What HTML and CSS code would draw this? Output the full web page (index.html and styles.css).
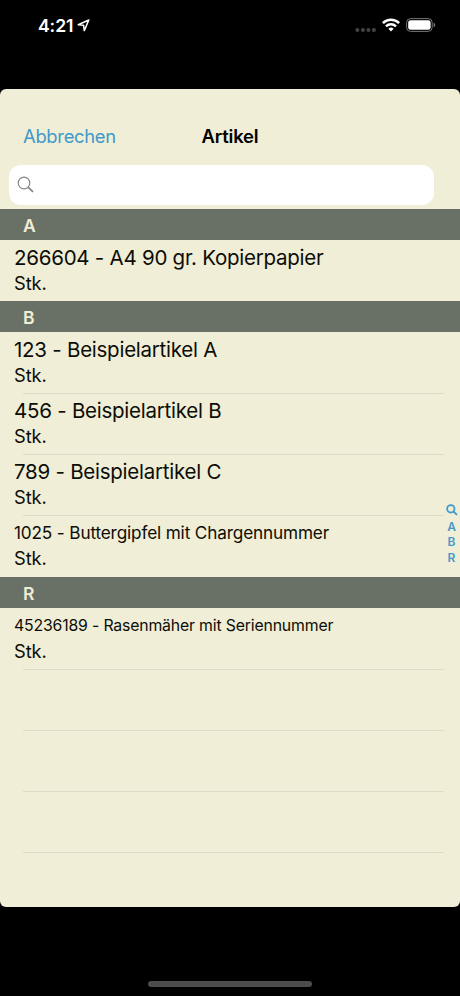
FILE: index.html
```html
<!DOCTYPE html>
<html lang="de">
<head>
<meta charset="utf-8">
<title>Artikel</title>
<link rel="stylesheet" href="styles.css">
</head>
<body>
<header class="status">
  <span class="clock">4:21</span>
  <svg class="location" width="13" height="13" viewBox="0 0 13 13"><path d="M11.8 1 1.2 5.7 6.5 6.2 7.3 11.6Z" fill="none" stroke="#fff" stroke-width="1.5" stroke-linejoin="round"/></svg>
  <svg class="signal" width="22" height="4" viewBox="0 0 22 4" fill="#444"><circle cx="2.4" cy="2" r="2"/><circle cx="7.9" cy="2" r="2"/><circle cx="13.4" cy="2" r="2"/><circle cx="18.9" cy="2" r="2"/></svg>
  <svg class="wifi" width="18" height="14" viewBox="0 0 18 14"><g fill="none" stroke="#fff" stroke-width="2.5"><path d="M.9 5.1a11.5 11.5 0 0 1 16.2 0"/><path d="M4 8.4a7.1 7.1 0 0 1 10 0"/></g><path d="M9 13.4 6.4 10.8a3.7 3.7 0 0 1 5.2 0Z" fill="#fff"/></svg>
  <svg class="battery" width="30" height="14" viewBox="0 0 30 14"><rect x=".6" y=".6" width="25.6" height="12.8" rx="4" fill="none" stroke="#777"/><rect x="2.2" y="2.2" width="22.4" height="9.6" rx="2.4" fill="#fff"/><path d="M27.6 4.8a2.3 2.3 0 0 1 0 4.4Z" fill="#777"/></svg>
</header>
<main class="sheet">
  <nav class="nav">
    <a class="cancel">Abbrechen</a>
    <h1 class="title">Artikel</h1>
  </nav>
  <div class="search">
    <svg width="18" height="18" viewBox="0 0 18 18" fill="none" stroke="#858585"><circle cx="7" cy="7" r="5.8" stroke-width="1.2"/><path d="m11.3 11.3 4.7 4.5" stroke-width="1.8"/></svg>
  </div>
  <section class="list">
    <h2 class="section">A</h2>
    <div class="cell"><p class="name">266604 - A4 90 gr. Kopierpapier</p><p class="unit">Stk.</p></div>
    <h2 class="section">B</h2>
    <div class="cell"><p class="name">123 - Beispielartikel A</p><p class="unit">Stk.</p></div>
    <div class="cell ruled"><p class="name">456 - Beispielartikel B</p><p class="unit">Stk.</p></div>
    <div class="cell ruled"><p class="name">789 - Beispielartikel C</p><p class="unit">Stk.</p></div>
    <div class="cell ruled tall"><p class="name medium">1025 - Buttergipfel mit Chargennummer</p><p class="unit">Stk.</p></div>
    <h2 class="section">R</h2>
    <div class="cell"><p class="name small">45236189 - Rasenmäher mit Seriennummer</p><p class="unit">Stk.</p></div>
    <div class="cell ruled"></div>
    <div class="cell ruled"></div>
    <div class="cell ruled"></div>
    <div class="cell ruled"></div>
  </section>
  <aside class="index">
    <svg width="12" height="12" viewBox="0 0 12 12" fill="none" stroke="#4299ca" stroke-width="1.8"><circle cx="4.8" cy="4.8" r="3.7"/><path d="m7.5 7.5 3.5 3.4"/></svg>
    <span>A</span><span>B</span><span>R</span>
  </aside>
</main>
<div class="home"></div>
</body>
</html>
```
FILE: styles.css
```css
* { box-sizing: border-box; margin: 0; padding: 0; }
body {
  width: 460px; height: 996px; overflow: hidden;
  background: #000; color: #0c0d08;
  font-family: Inter, "Liberation Sans", sans-serif;
  display: flex; flex-direction: column;
}
svg { display: block; flex: none; }
.status { height: 89px; flex: none; display: flex; align-items: flex-start; padding: 0 24px 0 38px; color: #fff; }
.clock { width: 37px; margin-top: 15px; font-size: 17.6px; line-height: 22px; font-weight: 600; letter-spacing: -.1px; white-space: nowrap; }
.location { margin: 19px 0 0 2px; }
.signal { margin: 28px 0 0 auto; }
.wifi { margin: 18px 0 0 5px; }
.battery { margin: 18px 0 0 6px; }
.sheet { position: relative; height: 818px; flex: none; background: #f0eed6; border-radius: 6px; overflow: hidden; }
.nav { height: 76px; padding: 36px 23px 0; display: grid; grid-template-columns: 1fr auto 1fr; line-height: 22px; }
.cancel { color: #4299ca; font-size: 18.4px; letter-spacing: -.3px; }
.title { color: #000; font-size: 18.4px; font-weight: 600; letter-spacing: -.15px; }
.search { height: 40px; width: 425px; margin: 0 0 4px 9px; padding: 11px 8px; background: #fff; border-radius: 12px; }
.section { height: 31px; padding: 1px 23px 0; background: #697166; color: #f0eed6; font-size: 17.5px; line-height: 32px; font-weight: 600; }
.cell { height: 61px; padding: 4px 14px 0; white-space: nowrap; }
.cell.ruled { background: linear-gradient(#dddcc8, #dddcc8) 23px 0 / 421px 1px no-repeat; }
.cell.tall { height: 62px; }
.name { font-size: 20.5px; letter-spacing: -.25px; line-height: 27px; height: 27px; }
.name.medium { font-size: 17.2px; letter-spacing: -.15px; line-height: 27px; }
.name.small { font-size: 15.8px; letter-spacing: -.16px; line-height: 27px; }
.unit { font-size: 18.3px; letter-spacing: -.1px; line-height: 25px; }
.index { position: absolute; right: 2px; top: 415px; width: 13px; display: flex; flex-direction: column; align-items: center; color: #4299ca; font-size: 12px; font-weight: 600; line-height: 15.3px; }
.index svg { margin-bottom: 3px; }
.home { width: 164px; height: 6px; margin: 74px auto 0; border-radius: 3px; background: #4c4c4c; }
```
